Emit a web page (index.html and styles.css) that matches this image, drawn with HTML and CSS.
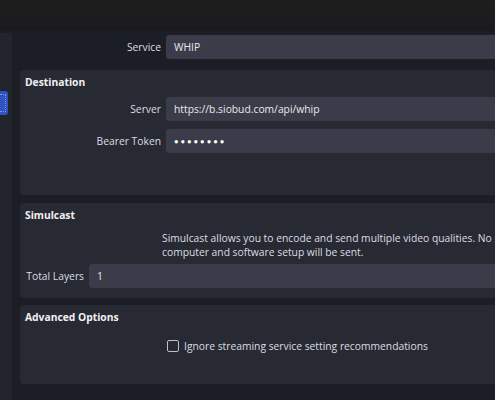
FILE: index.html
```html
<!DOCTYPE html>
<html>
<head>
<meta charset="utf-8">
<link rel="stylesheet" href="styles.css">
</head>
<body>
<div class="topbar"></div>
<div class="content">
  <div class="sidebar">
    <div class="side-btn"><div class="focus"></div></div>
  </div>
  <div class="main">
    <div class="row service-row">
      <div class="label">Service</div>
      <div class="input">WHIP</div>
    </div>

    <div class="group dest">
      <div class="title">Destination</div>
      <div class="row r-server">
        <div class="label">Server</div>
        <div class="input">https://b.siobud.com/api/whip</div>
      </div>
      <div class="row r-token">
        <div class="label">Bearer Token</div>
        <div class="input dots">●●●●●●●●</div>
      </div>
    </div>

    <div class="group simul">
      <div class="title">Simulcast</div>
      <div class="desc">Simulcast allows you to encode and send multiple video qualities. No information about your<br>computer and software setup will be sent.</div>
      <div class="layers">
        <div class="label-l">Total Layers</div>
        <div class="input">1</div>
      </div>
    </div>

    <div class="group adv">
      <div class="title">Advanced Options</div>
      <div class="check-row">
        <div class="checkbox"></div>
        <div class="check-text">Ignore streaming service setting recommendations</div>
      </div>
    </div>
  </div>
</div>
</body>
</html>
```
FILE: styles.css
```css
html, body {
  margin: 0;
  padding: 0;
  overflow: hidden;
}
body {
  width: 495px;
  height: 400px;
  background: #1c1e25;
  font-family: "Open Sans", "Noto Sans", sans-serif;
  font-size: 10.3px;
  color: #dcdde2;
}
.topbar {
  height: 31px;
  background: linear-gradient(#1e1e1f, #1a1a1c);
}
.content {
  display: flex;
  width: 580px;
}
.sidebar {
  width: 12px;
  margin-top: 2px;
  height: 367px;
  background: #23252d;
  padding-top: 58px;
  box-sizing: border-box;
  flex: none;
}
.side-btn {
  width: 8px;
  height: 24px;
  background: #2f53c2;
  border-radius: 0 3px 3px 0;
  padding: 3px 2px 3px 0;
  box-sizing: border-box;
}
.focus {
  height: 100%;
  border: 1px dotted #7f97e0;
  border-left: none;
  box-sizing: border-box;
}
.main {
  flex: 1;
  padding-left: 8px;
  display: flex;
  flex-direction: column;
}
.row {
  display: flex;
  align-items: center;
}
.label {
  width: 129px;
  text-align: right;
  padding-right: 5px;
  flex: none;
  color: #dcdde2;
  white-space: nowrap;
}
.input {
  flex: 1;
  height: 24px;
  line-height: 24px;
  background: #3a3d49;
  border-radius: 3px;
  padding-left: 8px;
  color: #e8e9ee;
  white-space: nowrap;
}
.service-row {
  margin-top: 4px;
}
.service-row .label {
  width: 141px;
}
.group {
  background: #272a33;
  border-radius: 4px;
  margin-top: 8px;
  padding-left: 12px;
}
.title {
  font-weight: 700;
  color: #f0f0f2;
  height: 16px;
  line-height: 16px;
  margin-left: -7px;
}
.dest {
  margin-top: 11px;
  height: 125px;
  padding-top: 2px;
  box-sizing: border-box;
}
.dest .title { margin-top: 2px; }
.r-server { margin-top: 7px; }
.r-token { margin-top: 8px; }
.dots {
  font-size: 7.5px;
  letter-spacing: 2px;
  color: #ffffff;
}
.simul {
  height: 95px;
  padding-top: 2px;
  box-sizing: border-box;
  padding-left: 0;
}
.simul .title { margin-left: 0; padding-left: 5px; margin-top: 2px; }
.desc {
  margin-top: 8px;
  padding-left: 142px;
  line-height: 14px;
  white-space: nowrap;
  color: #dcdde2;
}
.layers {
  display: flex;
  align-items: center;
  margin-top: 5px;
}
.label-l {
  width: 64px;
  text-align: right;
  padding-right: 5px;
  flex: none;
  white-space: nowrap;
}
.adv {
  height: 79px;
  margin-top: 7px;
  padding-top: 4px;
  box-sizing: border-box;
}
.check-row {
  display: flex;
  align-items: center;
  margin-top: 14px;
  padding-left: 135px;
}
.checkbox {
  width: 10px;
  height: 10px;
  border: 1px solid #bfc1c8;
  border-radius: 2px;
  margin-right: 5px;
}
.check-text {
  color: #dcdde2;
}
```
